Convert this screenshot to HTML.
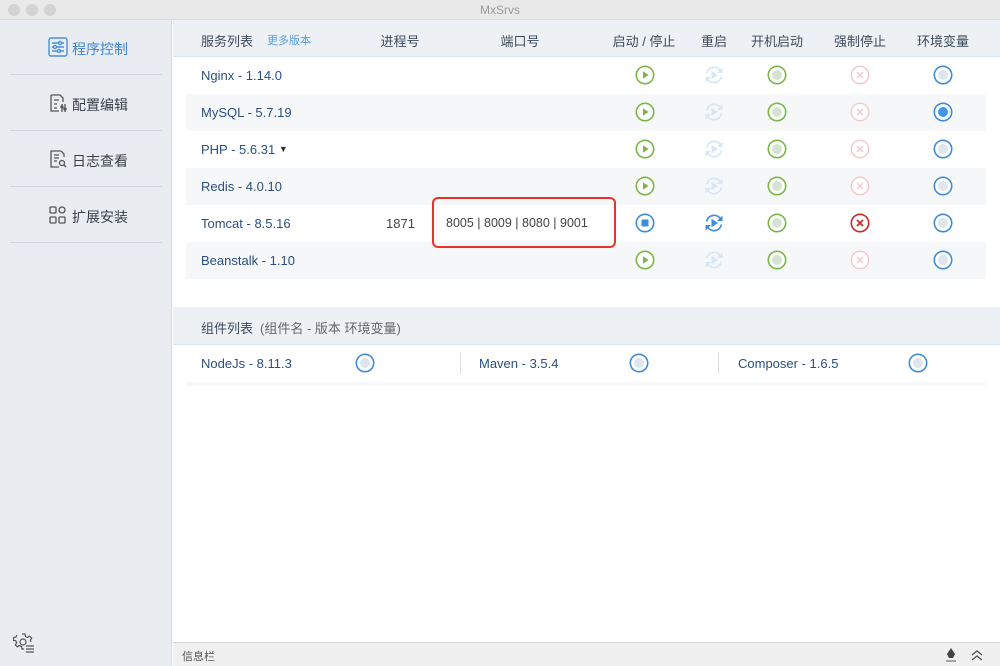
<!DOCTYPE html>
<html><head><meta charset="utf-8"><style>
*{margin:0;padding:0;box-sizing:border-box}
body{width:1000px;height:666px;overflow:hidden;font-family:"Liberation Sans","Noto Sans CJK SC",sans-serif;background:#fff;position:relative;font-size:13px}
.a{position:absolute}
.title{left:0;top:0;width:1000px;height:20px;background:#e9e9e9;border-bottom:1px solid #d8d8d8;text-align:center;color:#9a9a9a;font-size:12px;line-height:20px}
.dot{top:4px;width:12px;height:12px;border-radius:50%;background:#d3d3d3}
.side{left:0;top:20px;width:172px;height:646px;background:#e9ecf1;border-right:1px solid #d5d9df}
.nav{left:10px;width:152px;height:55px;border-bottom:1px solid #d3d7dd;color:#3a3f48;font-size:14px}
.nav span{position:absolute;left:62px;top:19px}
.hdr{left:173px;top:20px;width:827px;height:37px;background:#edf1f5;border-bottom:1px solid #dbe3ec;color:#3e4a5a;font-size:13px}
.hdr span{position:absolute;top:11px;transform:translateX(-50%)}
.row{left:186px;width:800px;height:37px}
.alt{background:#f6f7f9}
.nm{position:absolute;left:15px;top:11px;color:#2a4f7f;font-size:13px}
.ic{position:absolute;top:8px;width:20px;height:20px}
</style></head><body>
<div class="a title">MxSrvs</div>
<div class="a dot" style="left:8px"></div><div class="a dot" style="left:26px"></div><div class="a dot" style="left:44px"></div>
<div class="a side">
<div class="a nav" style="top:0"><svg class="a" style="left:38px;top:17px" width="20" height="20" viewBox="0 0 20 20" fill="none" stroke="#4a8fd8" stroke-width="1.4"><rect x="1" y="1" width="18" height="18" rx="2"/><path d="M4 6h12M4 10h12M4 14h12"/><circle cx="12" cy="6" r="1.5" fill="#fff"/><circle cx="7" cy="10" r="1.5" fill="#fff"/><circle cx="11" cy="14" r="1.5" fill="#fff"/></svg><span style="color:#3d84d4">程序控制</span></div>
<div class="a nav" style="top:56px"><svg class="a" style="left:38px;top:17px" width="20" height="20" viewBox="0 0 20 20" fill="none" stroke="#555" stroke-width="1.3"><path d="M3 2h9l3 3v4M3 2v16h8"/><path d="M6 7h5M6 11h3M6 15h3M14 11v8M17 11v8"/><circle cx="14" cy="14" r="1"/><circle cx="17" cy="16" r="1"/></svg><span>配置编辑</span></div>
<div class="a nav" style="top:112px"><svg class="a" style="left:38px;top:17px" width="20" height="20" viewBox="0 0 20 20" fill="none" stroke="#555" stroke-width="1.3"><path d="M13 2H3v16h8M13 2l3 3v3"/><path d="M6 6h5M6 9h5M6 12h3"/><circle cx="14" cy="14" r="2.5"/><path d="M16 16l2 2"/></svg><span>日志查看</span></div>
<div class="a nav" style="top:168px"><svg class="a" style="left:38px;top:17px" width="20" height="20" viewBox="0 0 20 20" fill="none" stroke="#555" stroke-width="1.3"><rect x="2" y="2" width="6" height="6" rx="1"/><circle cx="14" cy="5" r="3"/><rect x="2" y="12" width="6" height="6" rx="1"/><rect x="11" y="12" width="6" height="6" rx="1"/></svg><span>扩展安装</span></div>
<svg class="a" style="left:13px;top:612px" width="22" height="22" viewBox="0 0 22 22" fill="none" stroke="#555" stroke-width="1.2"><path d="M9 2h3l.5 2.5 2 1 2.2-1.4 2 2-1.4 2.2.7 1.7M11 17H9l-.5-2.5-2-1-2.2 1.4-2-2 1.4-2.2-1-2L0.5 8.5v-3L3 5l1-2"/><circle cx="10" cy="10" r="3"/><path d="M13 14h8M13 17h8M13 20h8"/></svg>
</div>
<div class="a hdr">
<span style="left:28px;transform:none">服务列表</span>
<span style="left:94px;transform:none;font-size:11px;color:#5a9ee3;top:12px">更多版本</span>
<span style="left:227px">进程号</span><span style="left:347px">端口号</span><span style="left:471px">启动 / 停止</span><span style="left:541px">重启</span><span style="left:604px">开机启动</span><span style="left:687px">强制停止</span><span style="left:770px">环境变量</span>
</div>
<svg width="0" height="0" style="position:absolute"><defs>
<g id="play"><circle cx="10" cy="10" r="8.7" fill="#fff" stroke="#7ab648" stroke-width="1.6"/><path d="M8 6.3v7.4l5.6-3.7z" fill="#7ab648"/></g>
<g id="rs"><path d="M2.6 8.5A7.6 7.6 0 0 1 16.3 5.6M17.4 11.5A7.6 7.6 0 0 1 3.7 14.4" fill="none" stroke="#d6e6f7" stroke-width="1.7"/><path d="M18.5 2.5v5.5h-5.5zM1.5 17.5v-5.5h5.5z" fill="#d6e6f7"/><path d="M7.5 5.8v8.4l6.5-4.2z" fill="#d6e6f7"/></g>
<g id="rsA"><path d="M2.6 8.5A7.6 7.6 0 0 1 16.3 5.6M17.4 11.5A7.6 7.6 0 0 1 3.7 14.4" fill="none" stroke="#3d8ddb" stroke-width="1.7"/><path d="M18.5 2.5v5.5h-5.5zM1.5 17.5v-5.5h5.5z" fill="#3d8ddb"/><path d="M7.5 5.8v8.4l6.5-4.2z" fill="#3d8ddb"/></g>
<g id="boot"><circle cx="10" cy="10" r="8.7" fill="#fff" stroke="#7ab648" stroke-width="1.6"/><circle cx="10" cy="10" r="5" fill="#d5e3d1"/></g>
<g id="x"><circle cx="10" cy="10" r="8.7" fill="#fff" stroke="#f3cbc9" stroke-width="1.5"/><path d="M7 7l6 6M13 7l-6 6" stroke="#f3cbc9" stroke-width="1.5"/></g>
<g id="xA"><circle cx="10" cy="10" r="8.7" fill="#fff" stroke="#cc2a22" stroke-width="1.6"/><path d="M7 7l6 6M13 7l-6 6" stroke="#cc2a22" stroke-width="1.8"/></g>
<g id="env"><circle cx="10" cy="10" r="8.7" fill="#fff" stroke="#3d8ddb" stroke-width="1.6"/><circle cx="10" cy="10" r="5" fill="#dde5ee"/></g>
<g id="envA"><circle cx="10" cy="10" r="8.7" fill="#fff" stroke="#3d8ddb" stroke-width="1.6"/><circle cx="10" cy="10" r="5" fill="#3a98ee"/></g>
<g id="stop"><circle cx="10" cy="10" r="8.7" fill="#fff" stroke="#3d8ddb" stroke-width="1.6"/><rect x="6.5" y="6.5" width="7" height="7" rx="1" fill="#3d8ddb"/></g>
</defs></svg>

<div class="a row" style="top:57px"><span class="nm">Nginx - 1.14.0</span>
<svg class="ic" style="left:449px"><use href="#play"/></svg><svg class="ic" style="left:518px"><use href="#rs"/></svg><svg class="ic" style="left:581px"><use href="#boot"/></svg><svg class="ic" style="left:664px"><use href="#x"/></svg><svg class="ic" style="left:747px"><use href="#env"/></svg></div>
<div class="a row alt" style="top:94px"><span class="nm">MySQL - 5.7.19</span>
<svg class="ic" style="left:449px"><use href="#play"/></svg><svg class="ic" style="left:518px"><use href="#rs"/></svg><svg class="ic" style="left:581px"><use href="#boot"/></svg><svg class="ic" style="left:664px"><use href="#x"/></svg><svg class="ic" style="left:747px"><use href="#envA"/></svg></div>
<div class="a row" style="top:131px"><span class="nm">PHP - 5.6.31 <span style="font-size:9px;color:#333;vertical-align:2px">▼</span></span>
<svg class="ic" style="left:449px"><use href="#play"/></svg><svg class="ic" style="left:518px"><use href="#rs"/></svg><svg class="ic" style="left:581px"><use href="#boot"/></svg><svg class="ic" style="left:664px"><use href="#x"/></svg><svg class="ic" style="left:747px"><use href="#env"/></svg></div>
<div class="a row alt" style="top:168px"><span class="nm">Redis - 4.0.10</span>
<svg class="ic" style="left:449px"><use href="#play"/></svg><svg class="ic" style="left:518px"><use href="#rs"/></svg><svg class="ic" style="left:581px"><use href="#boot"/></svg><svg class="ic" style="left:664px"><use href="#x"/></svg><svg class="ic" style="left:747px"><use href="#env"/></svg></div>
<div class="a row" style="top:205px"><span class="nm">Tomcat - 8.5.16</span>
<span class="a" style="left:200px;top:11px;color:#444">1871</span>
<span class="a" style="left:260px;top:11px;color:#444;font-size:12.5px">8005 | 8009 | 8080 | 9001</span>
<svg class="ic" style="left:449px"><use href="#stop"/></svg><svg class="ic" style="left:518px"><use href="#rsA"/></svg><svg class="ic" style="left:581px"><use href="#boot"/></svg><svg class="ic" style="left:664px"><use href="#xA"/></svg><svg class="ic" style="left:747px"><use href="#env"/></svg></div>
<div class="a row alt" style="top:242px"><span class="nm">Beanstalk - 1.10</span>
<svg class="ic" style="left:449px"><use href="#play"/></svg><svg class="ic" style="left:518px"><use href="#rs"/></svg><svg class="ic" style="left:581px"><use href="#boot"/></svg><svg class="ic" style="left:664px"><use href="#x"/></svg><svg class="ic" style="left:747px"><use href="#env"/></svg></div>
<div class="a" style="left:432px;top:197px;width:184px;height:51px;border:2px solid #e8332b;border-radius:6px"></div>

<div class="a" style="left:173px;top:307px;width:827px;height:38px;background:#edf1f5;border-bottom:1px solid #dbe3ec;color:#3e4a5a"><span class="a" style="left:28px;top:11px">组件列表</span><span class="a" style="left:87px;top:11px;color:#666">(组件名 - 版本 环境变量)</span></div>
<div class="a" style="left:173px;top:345px;width:827px;height:37px">
<span class="nm" style="left:28px">NodeJs - 8.11.3</span><svg class="ic" style="left:182px"><use href="#env"/></svg>
<div class="a" style="left:287px;top:7px;width:1px;height:22px;background:#ddd"></div>
<span class="nm" style="left:306px">Maven - 3.5.4</span><svg class="ic" style="left:456px"><use href="#env"/></svg>
<div class="a" style="left:545px;top:7px;width:1px;height:22px;background:#ddd"></div>
<span class="nm" style="left:565px">Composer - 1.6.5</span><svg class="ic" style="left:735px"><use href="#env"/></svg>
</div>
<div class="a" style="left:186px;top:382px;width:800px;height:4px;background:#f6f7f9"></div>

<div class="a" style="left:173px;top:642px;width:827px;height:24px;background:#f0f0f0;border-top:1px solid #d6d6d6"><span class="a" style="left:9px;top:5px;font-size:11px;color:#555">信息栏</span>
<svg class="a" style="left:771px;top:4px" width="14" height="16" viewBox="0 0 14 16"><path d="M7 1l4 6-2 4H5L3 7z" fill="#444"/><path d="M2 14h10" stroke="#888" stroke-width="1.5"/></svg>
<svg class="a" style="left:797px;top:5px" width="14" height="14" viewBox="0 0 14 14" fill="none" stroke="#555" stroke-width="1.3"><path d="M2 7l5-4 5 4M2 12l5-4 5 4"/></svg>
</div>
</body></html>
